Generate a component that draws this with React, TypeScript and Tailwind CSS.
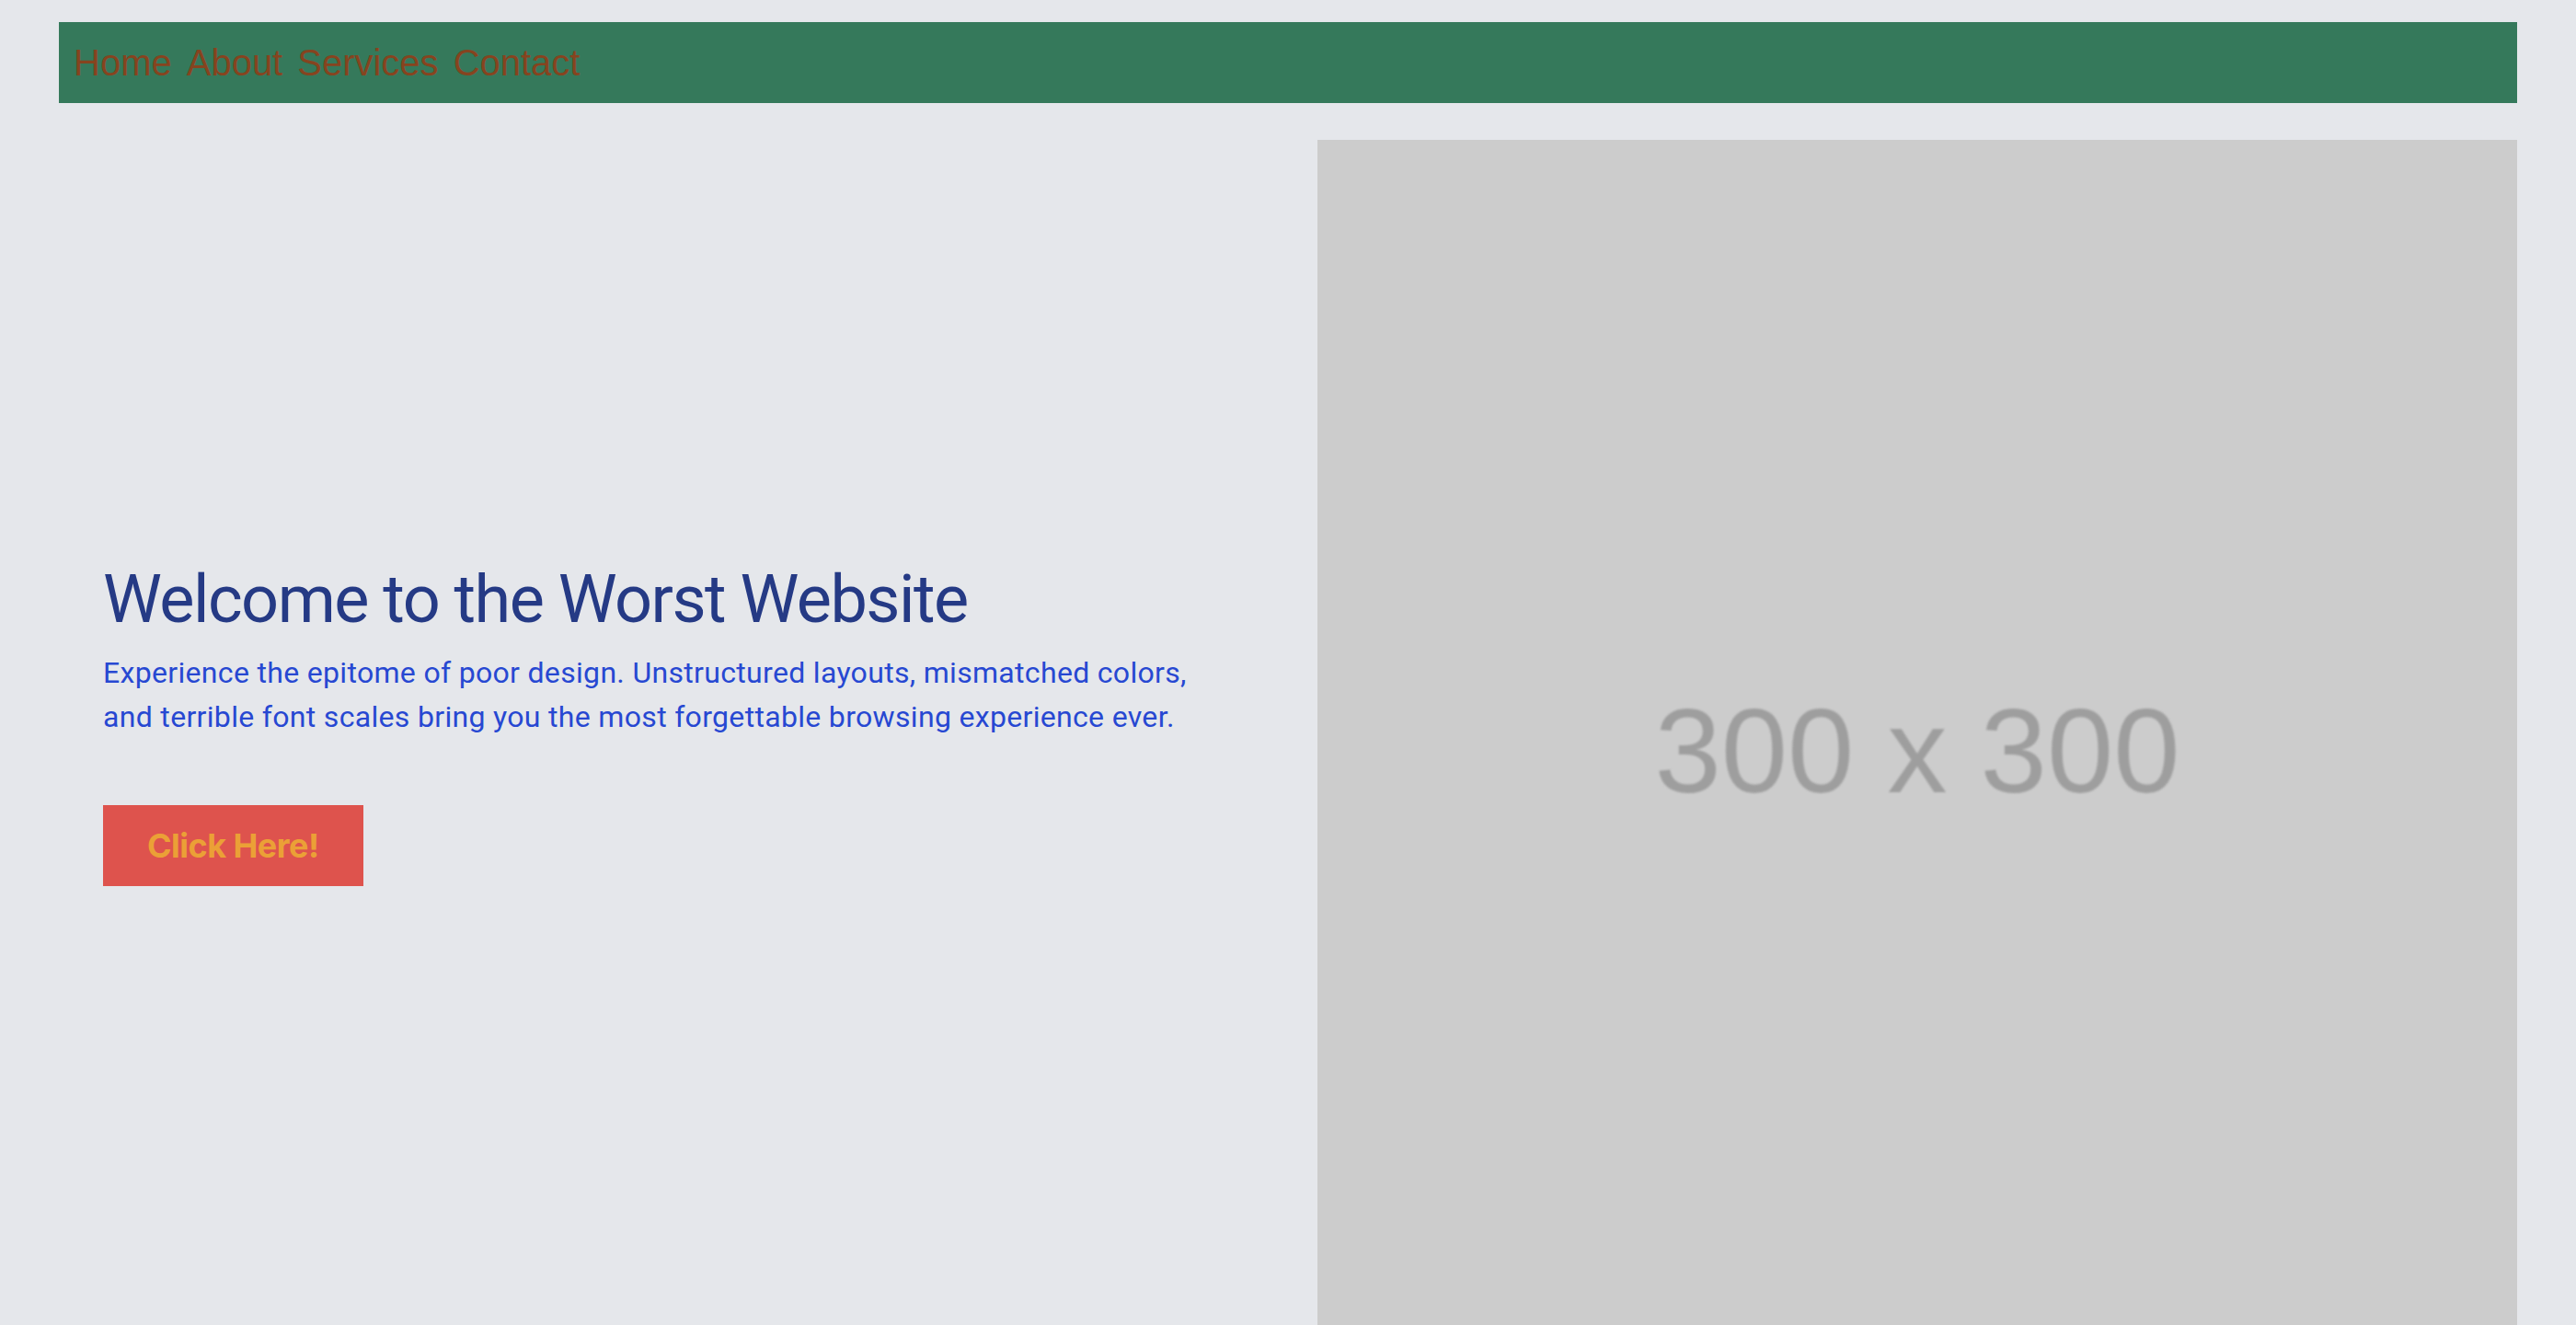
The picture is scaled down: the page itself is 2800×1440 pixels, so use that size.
export default function App() {
  return (
    <div className="min-h-screen bg-[#e5e7eb] px-[64px] pt-[24px] overflow-hidden">
      <nav className="bg-[#35795b] p-[16px]">
        <ul className="flex gap-[16px] text-[40px] leading-[56px] text-[#86441f] font-['Liberation_Sans',Arial,sans-serif]">
          <li><a href="#">Home</a></li>
          <li><a href="#">About</a></li>
          <li><a href="#">Services</a></li>
          <li><a href="#">Contact</a></li>
        </ul>
      </nav>

      <main className="mt-[40px] grid grid-cols-2 gap-[64px]">
        <section className="flex flex-col justify-center p-[48px] pb-[82px]">
          <h1 className="text-[72px] leading-[80px] tracking-[-0.021em] text-[#253a85] font-['Roboto',sans-serif]">
            Welcome to the Worst Website
          </h1>
          <p className="mt-[15px] text-[32px] leading-[48px] tracking-[0.01em] text-[#2748d2] font-['Roboto',sans-serif]">
            Experience the epitome of poor design. Unstructured layouts, mismatched colors, and
            terrible font scales bring you the most forgettable browsing experience ever.
          </p>
          <div className="mt-[72px]">
            <button className="bg-[#de534d] px-[48px] py-[16px] text-[36px] leading-[56px] font-bold tracking-[-0.015em] text-[#eba036] font-['Inter',sans-serif]">
              Click Here!
            </button>
          </div>
        </section>

        <div className="aspect-square bg-[#cccccc] flex items-center justify-center">
          <span className="mt-[24px] text-[130px] leading-none text-[#9e9e9e] blur-[1px] font-['Liberation_Sans',Arial,sans-serif]">
            300 x 300
          </span>
        </div>
      </main>
    </div>
  );
}
